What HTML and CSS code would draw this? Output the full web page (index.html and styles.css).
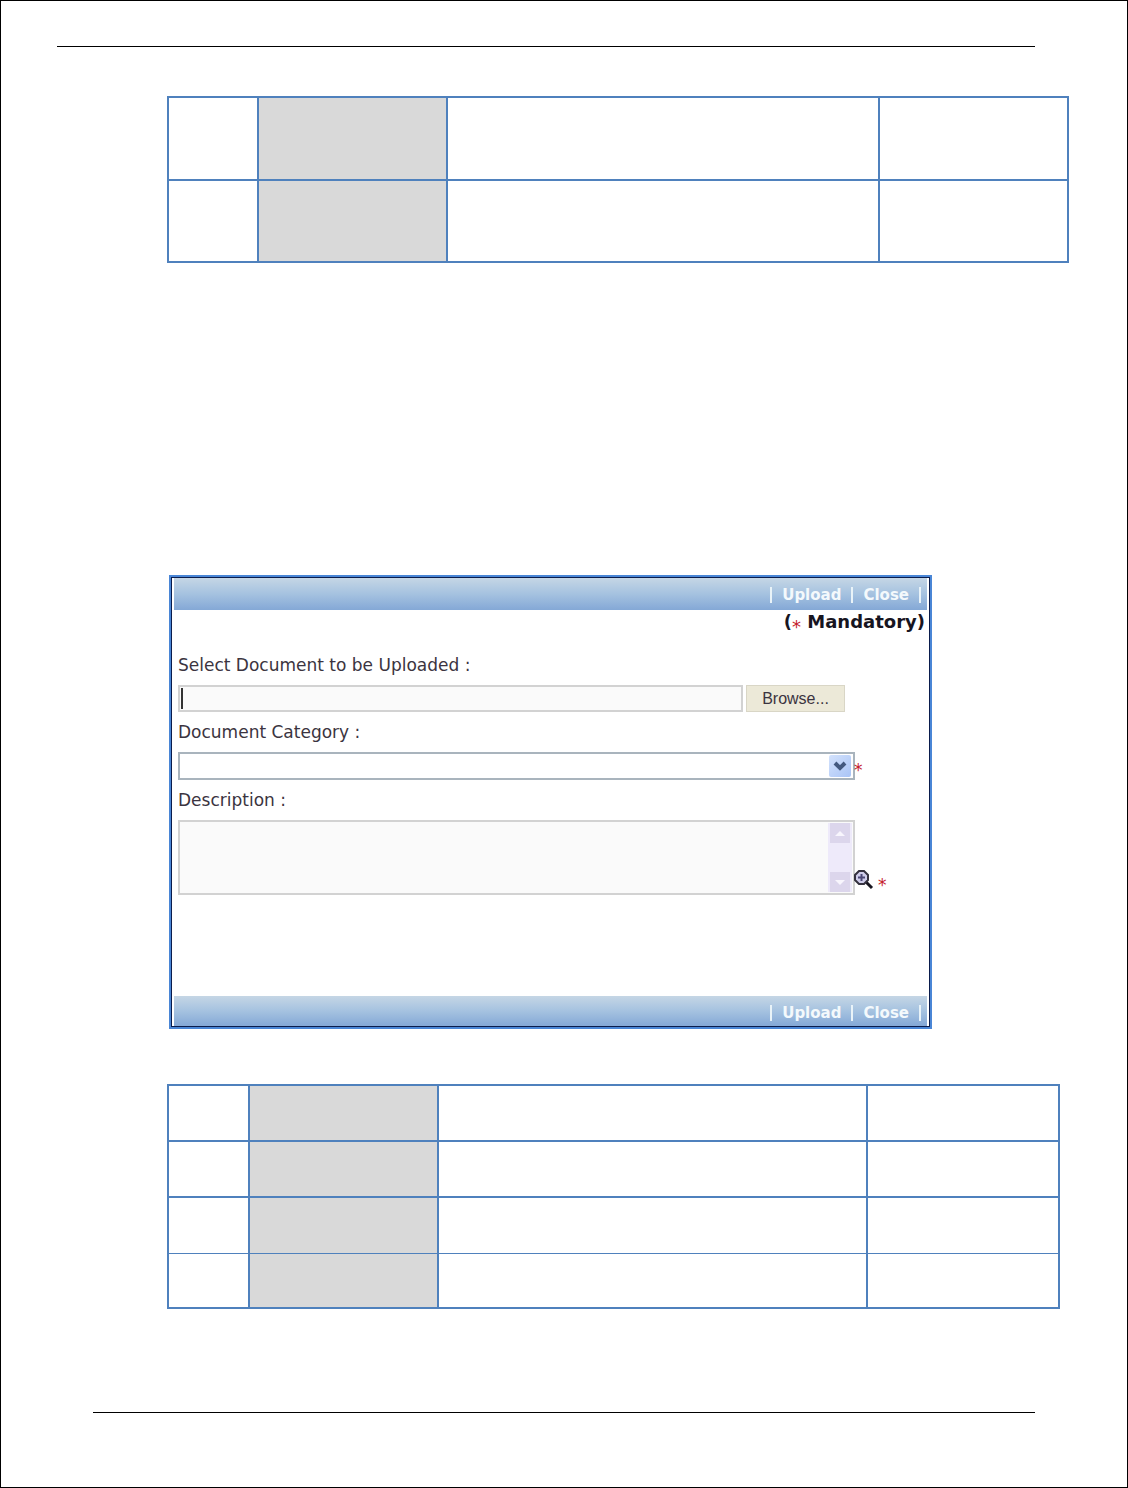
FILE: index.html
```html
<!DOCTYPE html>
<html lang="en">
<head>
<meta charset="utf-8">
<meta name="viewport" content="width=device-width, initial-scale=1">
<title>Upload Document</title>
<link rel="stylesheet" href="styles.css">
</head>
<body>
<div class="page">
  <header class="page-header"></header>
  <main class="content">
    <table class="grid grid-top">
      <colgroup><col class="c-num"><col class="c-name"><col class="c-desc"><col class="c-type"></colgroup>
      <tbody>
        <tr><td></td><td class="shade"></td><td></td><td></td></tr>
        <tr><td></td><td class="shade"></td><td></td><td></td></tr>
      </tbody>
    </table>

    <form class="panel">
      <div class="bar">
        <i class="sep"></i><button type="submit">Upload</button><i class="sep"></i><button type="button">Close</button><i class="sep"></i>
      </div>
      <p class="mandatory">(<span class="star small">*</span> Mandatory)</p>
      <div class="fields">
        <label for="doc">Select Document to be Uploaded :</label>
        <div class="row file-row">
          <input class="box file-path" id="doc" type="text">
          <button class="browse" type="button">Browse...</button>
        </div>
        <label for="category">Document Category :</label>
        <div class="row">
          <div class="control">
            <select class="box category" id="category"><option></option></select>
            <svg class="arrow" viewBox="0 0 22 22" aria-hidden="true">
              <defs><linearGradient id="arrowFill" x1="0" y1="0" x2="1" y2="1"><stop offset="0" stop-color="#d3e2fc"/><stop offset="1" stop-color="#a9c4f6"/></linearGradient></defs>
              <rect width="22" height="22" rx="2" fill="url(#arrowFill)"/>
              <path d="M6 8l5 5 5-5" fill="none" stroke="#43597f" stroke-width="4"/>
            </svg>
          </div>
          <div class="marks"><span class="star">*</span></div>
        </div>
        <label for="description">Description :</label>
        <div class="row">
          <div class="control">
            <textarea class="box description" id="description"></textarea>
            <div class="scroll" aria-hidden="true">
              <svg viewBox="0 0 20 20"><rect width="20" height="20" fill="#dcd6ec"/><path d="M5 13l5-5 5 5z" fill="#f8f6fd"/></svg>
              <svg viewBox="0 0 20 20"><rect width="20" height="20" fill="#dcd6ec"/><path d="M5 8l5 5 5-5z" fill="#f8f6fd"/></svg>
            </div>
          </div>
          <div class="marks">
            <button class="zoom" type="button" aria-label="Enlarge">
              <svg viewBox="0 0 20 20"><path d="M12 12l6 6" stroke="#17151f" stroke-width="3"/><path d="M5 1h5l4 4v5l-4 4H5l-4-4V5z" fill="#cfcdea" stroke="#35323f" stroke-width="2"/><path d="M7.500 4v7M4 7.500h7" stroke="#4c4876" stroke-width="2"/></svg>
            </button>
            <span class="star">*</span>
          </div>
        </div>
      </div>
      <div class="bar bar-bottom">
        <i class="sep"></i><button type="submit">Upload</button><i class="sep"></i><button type="button">Close</button><i class="sep"></i>
      </div>
    </form>

    <table class="grid grid-bottom">
      <colgroup><col class="c-num"><col class="c-name"><col class="c-desc"><col class="c-type"></colgroup>
      <tbody>
        <tr><td></td><td class="shade"></td><td></td><td></td></tr>
        <tr><td></td><td class="shade"></td><td></td><td></td></tr>
        <tr><td></td><td class="shade"></td><td></td><td></td></tr>
        <tr class="thin"><td></td><td class="shade"></td><td></td><td></td></tr>
      </tbody>
    </table>
  </main>
  <footer class="page-footer"></footer>
</div>
</body>
</html>
```
FILE: styles.css
```css
* { box-sizing: border-box; }

body {
  margin: 0;
  background: #fff;
  font: 17px/24px "DejaVu Sans", Verdana, sans-serif;
  color: #3b3440;
}

.page {
  display: flex;
  flex-direction: column;
  min-height: 100vh;
  border: 1px solid #000;
}

.page-header {
  margin: 45px 92px 0 56px;
  border-top: 1px solid #000;
}

.page-footer {
  margin: auto 92px 74px;
  border-top: 1px solid #000;
}

.content {
  padding: 49px 58px 0 166px;
}

/* Tables */
.grid {
  width: 100%;
  table-layout: fixed;
  border-collapse: collapse;
}

.grid td {
  padding: 0;
  border: 2px solid #4f81bd;
}

.grid .shade { background: #d9d9d9; }
.grid-top tr { height: 83px; }
.grid-top tr:last-child { height: 82px; }
.grid-top .c-num { width: 90px; }
.grid .c-name { width: 189px; }
.grid-top .c-type { width: 189px; }

.grid-bottom {
  width: calc(100% - 9px);
}

.grid-bottom tr { height: 56px; }
.grid-bottom .thin { height: 55px; }
.grid-bottom .c-num { width: 81px; }
.grid-bottom .c-type { width: 192px; }
.grid-bottom .thin td { border-top-width: 1px; }
.grid-bottom tr:nth-child(3) td { border-bottom-width: 1px; }

/* Upload panel */
.panel {
  max-width: 763px;
  margin: 312px 0 55px 2px;
  padding: 1px 3px;
  border: 2px solid #4a86d6;
  outline: 1px solid #0a1c4c;
  outline-offset: -3px;
}

.bar {
  display: flex;
  justify-content: flex-end;
  align-items: center;
  gap: 10px;
  height: 32px;
  padding: 2px 6px 0 0;
  background: linear-gradient(#c5d6e5, #a5c2e0 50%, #84a8d6);
}

.bar-bottom {
  height: 30px;
  padding-top: 4px;
}

.bar button {
  padding: 0;
  border: 0;
  background: none;
  font: bold 15px/24px "DejaVu Sans", Verdana, sans-serif;
  color: #f4f9fc;
}

.sep {
  width: 2px;
  height: 16px;
  background: #e9f3f8;
}

.mandatory {
  margin: 0;
  padding-right: 2px;
  text-align: right;
  font-size: 18px;
  font-weight: bold;
  color: #17151f;
}

.star {
  font-weight: normal;
  color: #c4202c;
}

.small {
  position: relative;
  top: 5px;
}

.fields {
  display: flex;
  flex-direction: column;
  gap: 8px;
  padding: 19px 0 101px 4px;
}

.row {
  display: flex;
  align-items: flex-end;
}

.file-row {
  gap: 3px;
  padding-right: 82px;
}

.box {
  display: block;
  width: 100%;
  margin: 0;
  border: 2px solid #d2d2d2;
  border-radius: 0;
  background: #fafafa;
  font: inherit;
  outline: 0;
}

.file-path {
  flex: 1;
  min-width: 0;
  height: 27px;
  background: linear-gradient(#333, #333) 1px 50% / 2px 21px no-repeat #fafafa;
}

.browse {
  width: 99px;
  height: 27px;
  padding: 0;
  border: 1px solid #d9d6c6;
  background: #ece9d8;
  font: 16px/24px "Liberation Sans", Arial, sans-serif;
  color: #3b3440;
}

.control {
  position: relative;
  flex: 1;
}

.category {
  height: 28px;
  appearance: none;
  border-color: #a9b4bd;
  background: #fff;
}

.arrow {
  position: absolute;
  top: 3px;
  right: 4px;
  width: 22px;
  height: 22px;
}

.description {
  height: 75px;
  resize: none;
}

.scroll {
  position: absolute;
  top: 3px;
  right: 3px;
  bottom: 3px;
  display: flex;
  flex-direction: column;
  justify-content: space-between;
  width: 24px;
  padding: 0 2px;
  background: #eeeafa;
}

.scroll svg {
  width: 20px;
  height: 20px;
}

.marks {
  position: relative;
  display: flex;
  align-items: flex-end;
  gap: 4px;
  width: 73px;
  margin-left: -1px;
}

.marks .star { height: 22px; }

.zoom {
  width: 20px;
  height: 20px;
  margin-bottom: 5px;
  padding: 0;
  border: 0;
  background: none;
}

.zoom svg { display: block; }
```
